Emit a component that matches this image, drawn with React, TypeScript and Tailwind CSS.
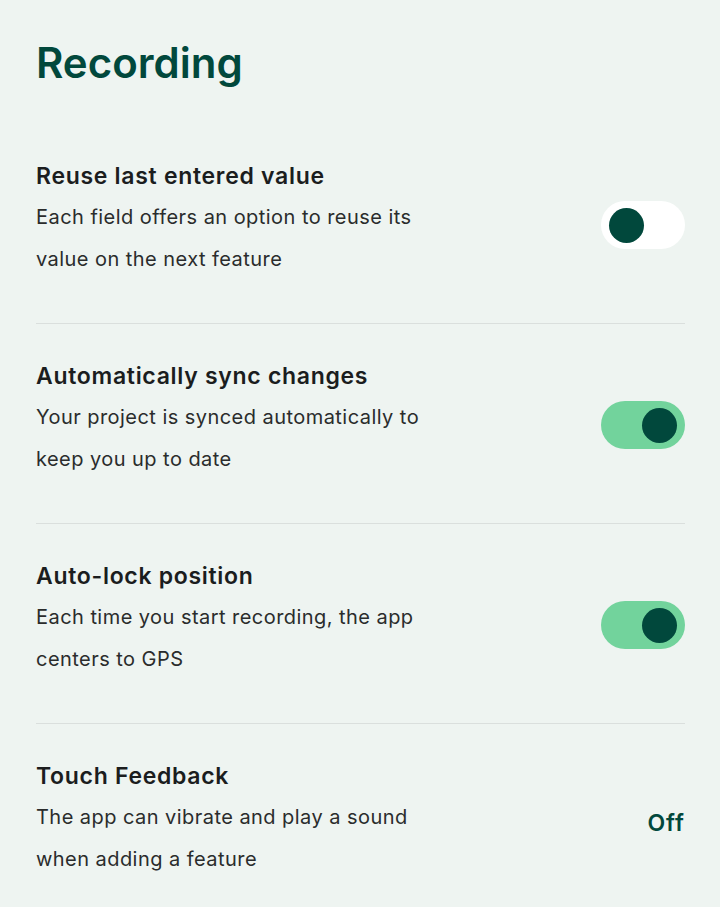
import React from 'react';

type Setting = {
  title: string;
  description: string;
  control: 'on' | 'off' | 'text';
};

const settings: Setting[] = [
  {
    title: 'Reuse last entered value',
    description: 'Each field offers an option to reuse its value on the next feature',
    control: 'off',
  },
  {
    title: 'Automatically sync changes',
    description: 'Your project is synced automatically to keep you up to date',
    control: 'on',
  },
  {
    title: 'Auto-lock position',
    description: 'Each time you start recording, the app centers to GPS',
    control: 'on',
  },
  {
    title: 'Touch Feedback',
    description: 'The app can vibrate and play a sound when adding a feature',
    control: 'text',
  },
];

const Toggle = ({ on }: { on: boolean }) => (
  <div
    className={
      on
        ? 'mt-[10px] flex h-[48px] w-[84px] shrink-0 items-center justify-end rounded-full bg-[#72d39c] px-[8px]'
        : 'mt-[10px] flex h-[48px] w-[84px] shrink-0 items-center justify-start rounded-full bg-white px-[8px]'
    }
  >
    <div className="h-[35px] w-[35px] rounded-full bg-[#01483c]" />
  </div>
);

export default function App() {
  return (
    <div
      className="min-h-screen bg-[#eef4f1] pl-[36px] pr-[35px] pt-[39px]"
      style={{ fontFamily: 'Inter, "Noto Sans", sans-serif' }}
    >
      <h1 className="text-[42px] font-semibold leading-[48px] text-[#01483c]">Recording</h1>
      <div className="mt-[37px]">
        {settings.map((s, i) => (
          <div
            key={s.title}
            className={
              i < settings.length - 1
                ? 'flex items-center justify-between border-b border-[#dadfdd] pb-[43px] pt-[36px]'
                : 'flex items-center justify-between pb-[43px] pt-[36px]'
            }
          >
            <div className="max-w-[430px]">
              <div className="text-[23px] font-semibold leading-[32px] tracking-[0.7px] text-[#1b1d1e]">
                {s.title}
              </div>
              <div className="mt-[4px] text-[20px] leading-[42px] tracking-[0.45px] text-[#2a2c2c]">
                {s.description}
              </div>
            </div>
            {s.control === 'text' ? (
              <div className="mt-[7px] text-[23px] font-semibold tracking-[1px] text-[#01483c]">Off</div>
            ) : (
              <Toggle on={s.control === 'on'} />
            )}
          </div>
        ))}
      </div>
    </div>
  );
}
